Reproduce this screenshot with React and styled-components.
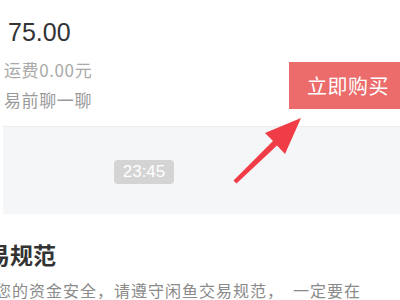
import React from "react";
import styled, { createGlobalStyle } from "styled-components";

const Global = createGlobalStyle`
  html, body { margin: 0; padding: 0; background: #fff; }
  body { width: 400px; height: 300px; overflow: hidden; font-family: "Noto Sans CJK SC", "Noto Sans", sans-serif; }
`;

const Page = styled.div`
  position: relative;
  width: 400px;
  height: 300px;
  overflow: hidden;
  background: #fff;
`;

const Price = styled.div`
  font-family: "Liberation Sans", Arial, sans-serif;
  font-size: 25px;
  line-height: 30px;
  color: #333;
  padding: 17px 0 0 8px;
`;

const InfoRow = styled.div`
  display: flex;
  justify-content: space-between;
  align-items: flex-start;
  margin-top: 15px;
`;

const InfoCol = styled.div`
  display: flex;
  flex-direction: column;
  gap: 14px;
  padding-left: 4px;
`;

const InfoText = styled.div`
  font-size: 17px;
  line-height: 16px;
  letter-spacing: 0.6px;
  color: ${(p) => p.$color};
  white-space: nowrap;
`;

const BuyButton = styled.div`
  width: 111px;
  height: 47px;
  background: #ec6b6b;
  color: #fff;
  font-size: 20px;
  letter-spacing: 0.5px;
  display: flex;
  align-items: center;
  padding-left: 18px;
  box-sizing: border-box;
`;

const ChatPanel = styled.div`
  margin: 17px 0 0 3px;
  height: 88px;
  background: #f5f6f8;
  border-top: 1px solid #ebecee;
  box-sizing: border-box;
  display: flex;
  align-items: center;
  padding-left: 111px;
`;

const TimePill = styled.div`
  width: 60px;
  height: 24px;
  border-radius: 4px;
  background: #d4d4d4;
  color: #fff;
  font-family: "Liberation Sans", Arial, sans-serif;
  font-size: 17px;
  display: flex;
  align-items: center;
  justify-content: center;
  margin-top: 2px;
`;

const Title = styled.div`
  margin: 25px 0 0 -36px;
  font-size: 23px;
  line-height: 30px;
  font-weight: 700;
  color: #333;
  white-space: nowrap;
`;

const Body = styled.div`
  margin: 10px 0 0 -39px;
  font-size: 16px;
  line-height: 22px;
  letter-spacing: 1px;
  color: #8a8a8a;
  white-space: nowrap;
`;

const ArrowLayer = styled.svg`
  position: absolute;
  left: 0;
  top: 0;
  pointer-events: none;
`;

export default function App() {
  return (
    <Page>
      <Global />
      <Price>75.00</Price>
      <InfoRow>
        <InfoCol>
          <InfoText $color="#a9a9a9">运费0.00元</InfoText>
          <InfoText $color="#9a9a9a">易前聊一聊</InfoText>
        </InfoCol>
        <BuyButton>立即购买</BuyButton>
      </InfoRow>
      <ChatPanel>
        <TimePill>23:45</TimePill>
      </ChatPanel>
      <Title>交易规范</Title>
      <Body>保护您的资金安全，请遵守闲鱼交易规范，　一定要在</Body>
      <ArrowLayer width="400" height="300" viewBox="0 0 400 300">
        <polygon
          points="301,118 265,133 273,141 233.5,180.5 236.5,183.5 277,145.5 285,154"
          fill="#f03c46"
        />
      </ArrowLayer>
    </Page>
  );
}
